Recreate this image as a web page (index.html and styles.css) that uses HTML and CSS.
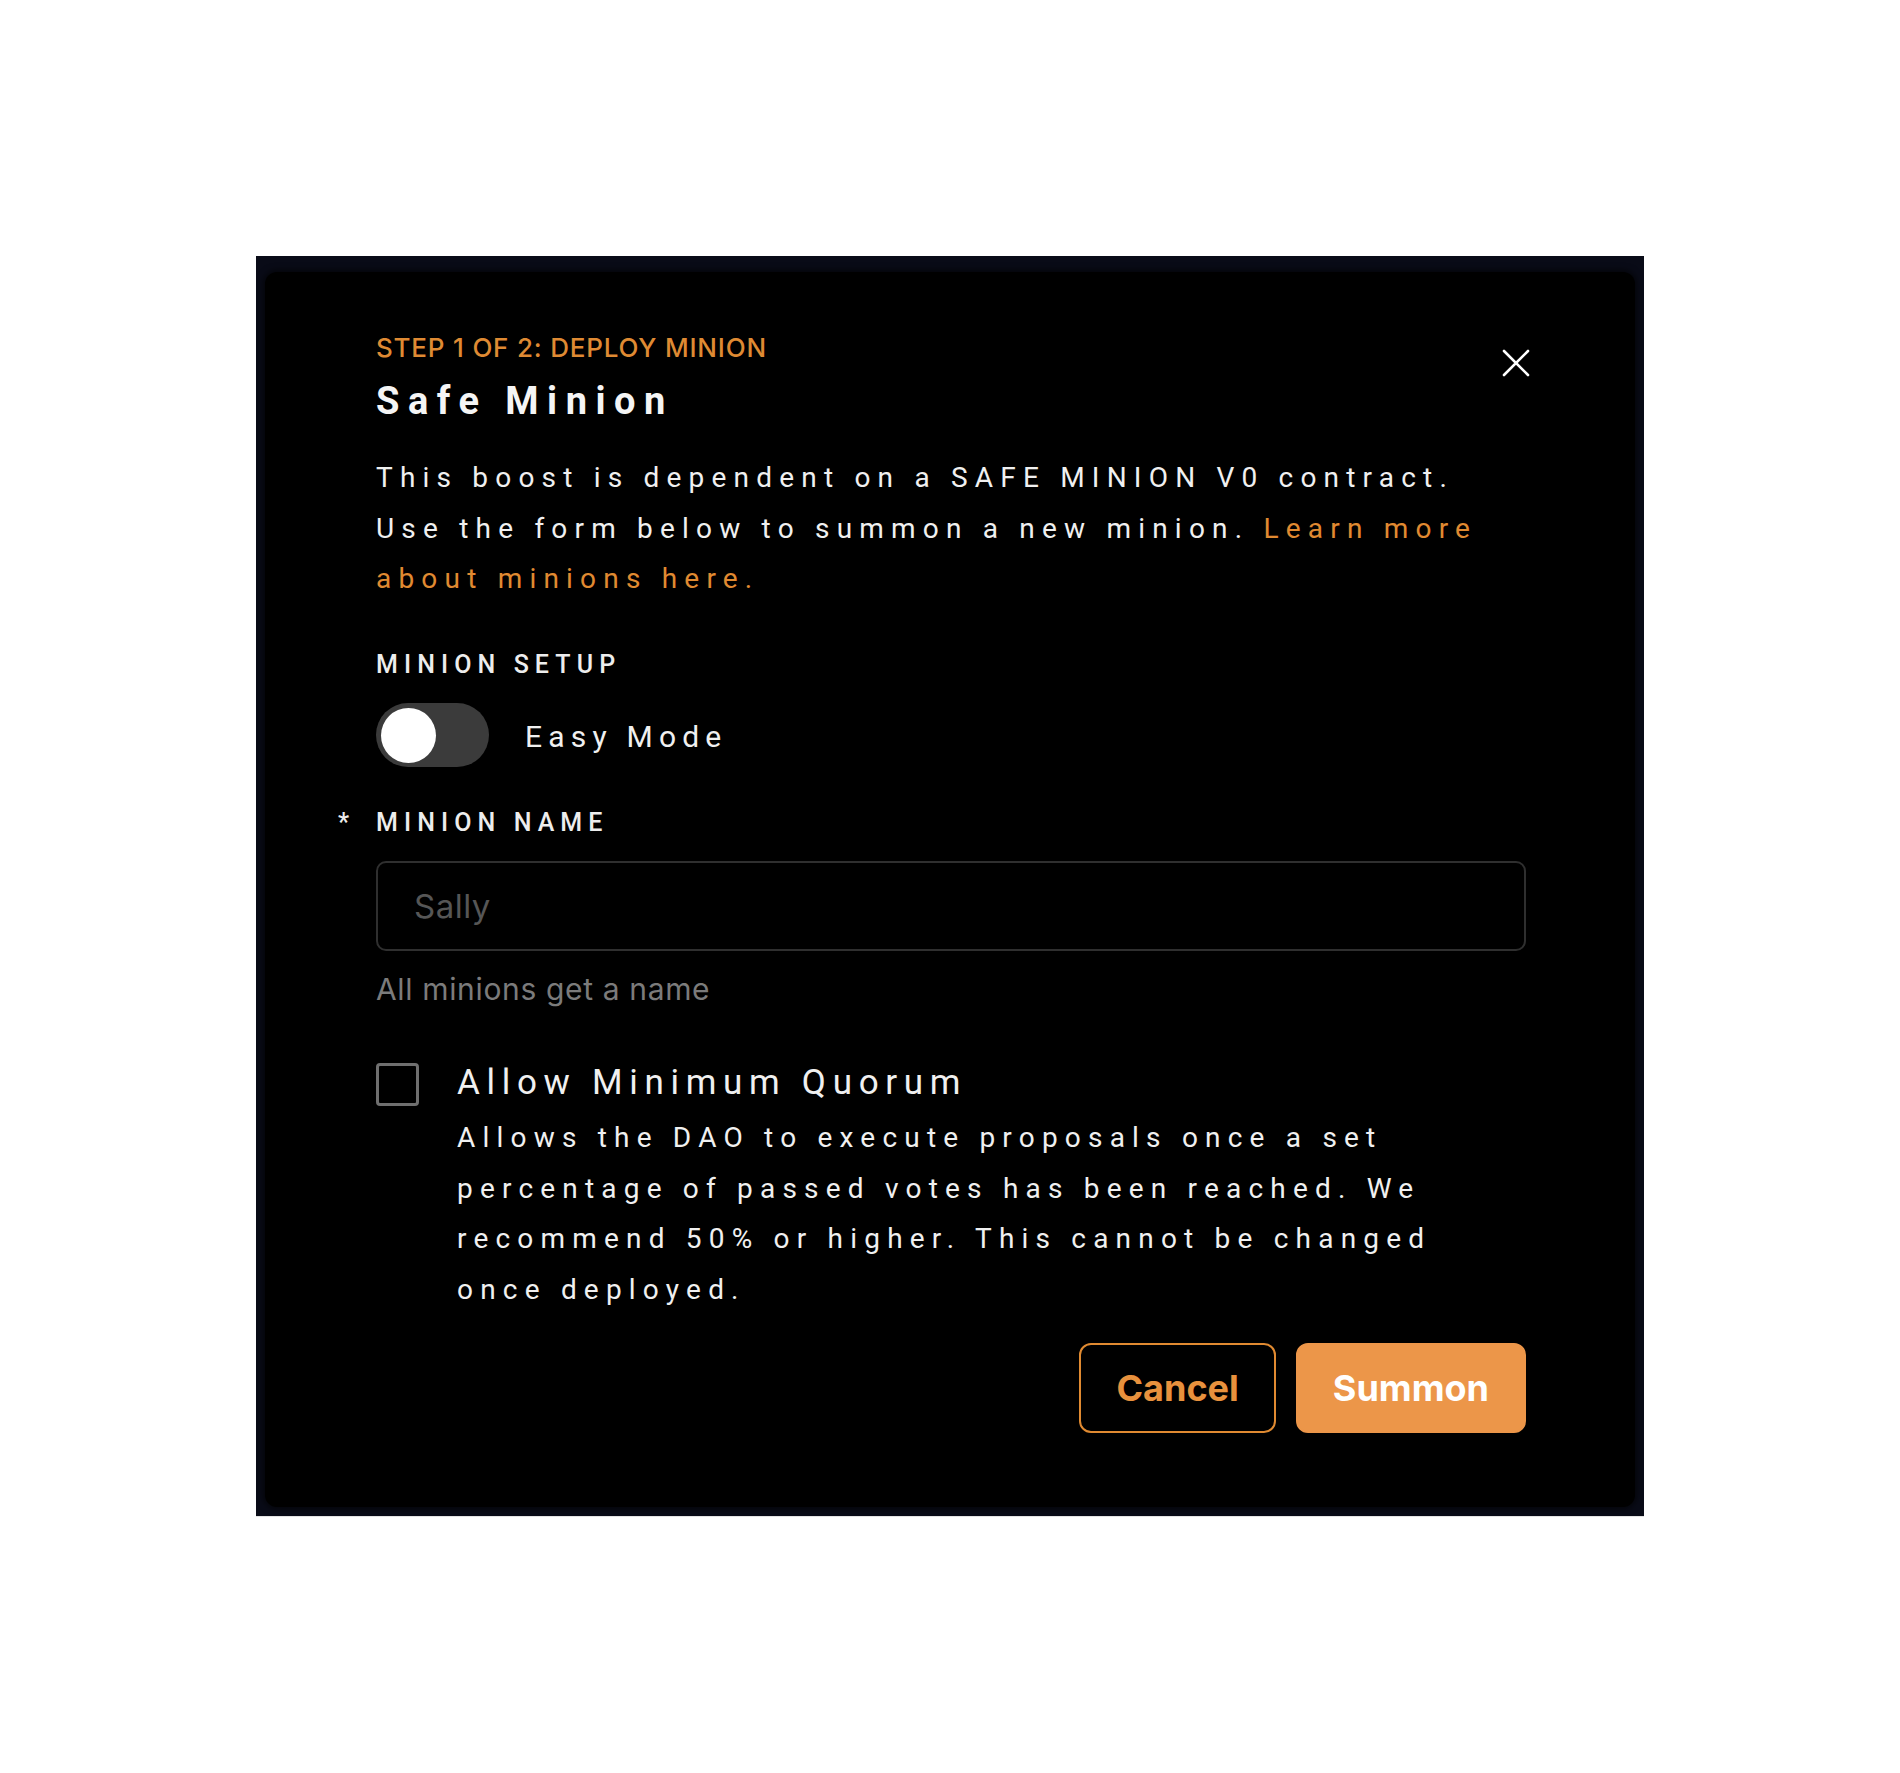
FILE: index.html
```html
<!DOCTYPE html>
<html lang="en">
<head>
<meta charset="utf-8">
<title>Deploy Minion</title>
<link rel="stylesheet" href="styles.css">
</head>
<body>
<div class="page">
  <div class="frame">
    <section class="modal">
      <button class="close" aria-label="Close">
        <svg width="28" height="28" viewBox="0 0 28 28"><path d="M2 2 L26 26 M26 2 L2 26" stroke="#fff" stroke-width="2.6" stroke-linecap="round"/></svg>
      </button>
      <div class="step">STEP 1 OF 2: DEPLOY MINION</div>
      <h2 class="title">Safe Minion</h2>
      <p class="desc">This boost is dependent on a SAFE MINION V0 contract. Use the form below to summon a new minion. <a class="link" href="#">Learn more about minions here.</a></p>

      <div class="label">MINION SETUP</div>
      <div class="toggle-row">
        <span class="switch"><span class="knob"></span></span>
        <span class="toggle-text">Easy Mode</span>
      </div>

      <div class="label required">MINION NAME</div>
      <div class="input"><span class="placeholder">Sally</span></div>
      <div class="helper">All minions get a name</div>

      <div class="check-row">
        <span class="checkbox"></span>
        <div class="check-body">
          <div class="check-title">Allow Minimum Quorum</div>
          <p class="check-desc">Allows the DAO to execute proposals once a set percentage of passed votes has been reached. We recommend 50% or higher. This cannot be changed once deployed.</p>
        </div>
      </div>

      <div class="actions">
        <button class="btn btn-outline">Cancel</button>
        <button class="btn btn-solid">Summon</button>
      </div>
    </section>
  </div>
</div>
</body>
</html>
```

FILE: styles.css
```css
html, body {
  margin: 0;
  padding: 0;
  background: #ffffff;
}

.page {
  padding: 256px 0 0 256px;
}

.frame {
  width: 1388px;
  box-sizing: border-box;
  padding: 16px 9px 9px 9px;
  background: #090b17;
  border-bottom: 1px solid #e4e4e4;
}

.modal {
  position: relative;
  background: #000000;
  border-radius: 12px;
  padding: 61px 109px 74px 111px;
  color: #f0f0f0;
  font-family: Roboto, "Liberation Sans", sans-serif;
  box-shadow: 0 0 6px 2px rgba(0, 0, 0, 0.6);
}

.close {
  position: absolute;
  top: 77px;
  right: 105px;
  width: 28px;
  height: 28px;
  padding: 0;
  border: 0;
  background: transparent;
  display: flex;
}

.step {
  font-family: Inter, "Liberation Sans", sans-serif;
  font-size: 26px;
  line-height: 30px;
  font-weight: 500;
  letter-spacing: 0.8px;
  color: #df8a33;
}

.title {
  margin: 15px 0 0 0;
  font-size: 38px;
  line-height: 46px;
  font-weight: 700;
  letter-spacing: 8.5px;
  color: #f5f5f5;
}

.desc {
  margin: 29px 0 0 0;
  font-size: 28px;
  line-height: 50.5px;
  letter-spacing: 7.2px;
}

.link {
  color: #e08a31;
  text-decoration: none;
}

.label {
  margin-top: 45px;
  font-size: 25px;
  line-height: 30px;
  font-weight: 500;
  letter-spacing: 6.1px;
  color: #ededed;
}

.label.required {
  position: relative;
  margin-top: 40.5px;
}

.label.required::before {
  content: "*";
  position: absolute;
  left: -38px;
  top: 0;
  letter-spacing: 0;
}

.toggle-row {
  margin-top: 23.5px;
  display: flex;
  align-items: center;
  gap: 36px;
}

.switch {
  width: 113px;
  height: 64px;
  box-sizing: border-box;
  padding: 4.5px;
  border-radius: 32px;
  background: #3b3b3b;
  display: flex;
  align-items: center;
}

.knob {
  width: 55px;
  height: 55px;
  border-radius: 50%;
  background: #ffffff;
}

.toggle-text {
  font-size: 30px;
  line-height: 36px;
  letter-spacing: 6.2px;
  padding-top: 3px;
}

.input {
  margin-top: 23.5px;
  height: 90px;
  box-sizing: border-box;
  border: 2px solid #2f2f2f;
  border-radius: 10px;
  padding: 0 36px;
  display: flex;
  align-items: center;
}

.placeholder {
  font-family: Inter, "Liberation Sans", sans-serif;
  font-size: 33px;
  letter-spacing: 0.5px;
  color: #565656;
}

.helper {
  margin-top: 22px;
  font-family: Inter, "Liberation Sans", sans-serif;
  font-size: 30px;
  line-height: 32px;
  letter-spacing: 0.65px;
  color: #7b7b7b;
}

.check-row {
  margin-top: 57px;
  display: grid;
  grid-template-columns: 43px 1fr;
  column-gap: 38px;
  align-items: start;
}

.checkbox {
  margin-top: 1px;
  width: 43px;
  height: 43px;
  box-sizing: border-box;
  border: 3px solid #6f6f6f;
  border-radius: 4px;
}

.check-title {
  font-size: 35px;
  line-height: 42px;
  letter-spacing: 6.7px;
}

.check-desc {
  margin: 9px 0 0 0;
  font-size: 28px;
  line-height: 50.5px;
  letter-spacing: 7.2px;
}

.actions {
  margin-top: 28px;
  display: flex;
  justify-content: flex-end;
  gap: 20px;
}

.btn {
  height: 90px;
  box-sizing: border-box;
  padding: 0 35px;
  border-radius: 12px;
  font-family: Inter, "Liberation Sans", sans-serif;
  font-size: 36px;
  font-weight: 700;
}

.btn-outline {
  background: transparent;
  border: 2px solid #e08a31;
  color: #e8913d;
}

.btn-solid {
  background: #ec9649;
  border: 2px solid #ec9649;
  color: #ffffff;
}
```
